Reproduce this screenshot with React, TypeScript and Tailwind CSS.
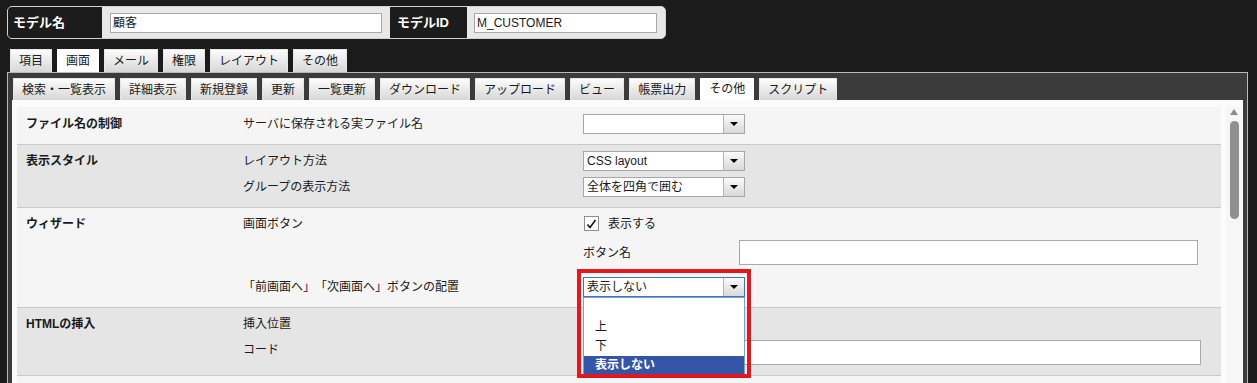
import React from "react";

function Select({ value = "", focused = false }: { value?: string; focused?: boolean }) {
  return (
    <div
      className={`flex h-[20px] w-[162px] border bg-white ${
        focused ? "border-[#3f74c0]" : "border-[#a6a6a6]"
      }`}
    >
      <div className="flex-1 truncate pl-[3px] leading-[18px]">{value}</div>
      <div className="flex w-[21px] items-center justify-center border-l border-[#b4b4b4] bg-linear-to-b from-[#fafafa] to-[#d9d9d9]">
        <div className="h-0 w-0 border-x-[4px] border-t-[4px] border-x-transparent border-t-black" />
      </div>
    </div>
  );
}

function Tab({ label, active = false, tall = false }: { label: string; active?: boolean; tall?: boolean }) {
  return (
    <div
      className={`flex items-center ${tall ? "h-[23px]" : "h-[22px]"} ${
        active
          ? "bg-white px-[9px]"
          : "bg-linear-to-b from-[#fcfcfc] to-[#d7d7d7] border-t border-x border-[#e6e6e6] px-[8px]"
      }`}
    >
      {label}
    </div>
  );
}

function Row({
  label,
  gray = false,
  top = "pt-[6px]",
  children,
}: {
  label: string;
  gray?: boolean;
  top?: string;
  children?: React.ReactNode;
}) {
  return (
    <div
      className={`flex border-b border-[#c9c9c9] pb-[10px] ${top} ${
        gray ? "bg-[#e5e5e5]" : "bg-[#f5f5f5]"
      }`}
    >
      <div className="w-[226px] pl-[9px] font-bold leading-[20px]">{label}</div>
      <div className="flex flex-1 flex-col gap-[6px]">{children}</div>
    </div>
  );
}

function Field({ label, children }: { label?: string; children?: React.ReactNode }) {
  return (
    <div className="flex">
      <div className="w-[340px] leading-[20px]">{label}</div>
      <div className="flex-1 pr-[20px]">{children}</div>
    </div>
  );
}

export default function App() {
  const topTabs = ["項目", "画面", "メール", "権限", "レイアウト", "その他"];
  const subTabs = [
    "検索・一覧表示",
    "詳細表示",
    "新規登録",
    "更新",
    "一覧更新",
    "ダウンロード",
    "アップロード",
    "ビュー",
    "帳票出力",
    "その他",
    "スクリプト",
  ];

  return (
    <div className="relative h-[383px] w-[1257px] overflow-hidden bg-[#1b1b1b] font-['Liberation_Sans','Noto_Sans_CJK_JP',sans-serif] text-[12px] text-[#1a1a1a] [text-spacing-trim:space-all]">
      {/* Model header */}
      <div className="pl-[7px] pt-[6px]">
        <div className="flex h-[33px] w-[659px] overflow-hidden rounded-[5px] border border-[#d2d2d2] bg-[#e8e8e8]">
          <div className="flex w-[94px] items-center bg-[#1c1c1c] pl-[5px] text-[13px] font-bold text-white">
            モデル名
          </div>
          <div className="flex w-[288px] items-center px-[8px]">
            <div className="h-[20px] w-full border border-[#a8a8a8] bg-white pl-[2px] leading-[18px]">顧客</div>
          </div>
          <div className="flex w-[77px] items-center bg-[#1c1c1c] pl-[7px] text-[13px] font-bold text-white">
            モデルID
          </div>
          <div className="flex flex-1 items-center pl-[7px] pr-[8px]">
            <div className="h-[20px] w-full border border-[#a8a8a8] bg-white pl-[2px] leading-[18px]">M_CUSTOMER</div>
          </div>
        </div>
      </div>

      {/* Top tabs */}
      <div className="mt-[10px] flex gap-[5px] pl-[10px]">
        {topTabs.map((t) => (
          <Tab key={t} label={t} active={t === "画面"} tall />
        ))}
      </div>

      {/* Panel */}
      <div className="ml-[7px] w-[1241px] border border-[#b9b9b9] bg-[#3b3b3b] px-[4px] pt-[5px]">
        <div className="ml-[1px] flex gap-[5px]">
          {subTabs.map((t) => (
            <Tab key={t} label={t} active={t === "その他"} />
          ))}
        </div>

        <div className="flex h-[300px] bg-[#fbfbfb] pl-[5px] pt-[7px]">
          <div className="w-[1204px]">
            <Row label="ファイル名の制御" top="pt-[7px]">
              <Field label="サーバに保存される実ファイル名">
                <Select />
              </Field>
            </Row>

            <Row label="表示スタイル" gray>
              <Field label="レイアウト方法">
                <Select value="CSS layout" />
              </Field>
              <Field label="グループの表示方法">
                <Select value="全体を四角で囲む" />
              </Field>
            </Row>

            <Row label="ウィザード">
              <Field label="画面ボタン">
                <div className="flex h-[19px] items-center gap-[9px] pl-[1px]">
                  <div className="flex h-[15px] w-[15px] items-center justify-center border border-[#8e8e8e] bg-white">
                    <svg width="11" height="10" viewBox="0 0 11 10">
                      <path d="M1.5 5.5 L4 8.5 L9.5 1" fill="none" stroke="#111" strokeWidth="1.6" />
                    </svg>
                  </div>
                  <span>表示する</span>
                </div>
              </Field>
              <Field>
                <div className="flex items-center">
                  <div className="w-[156px]">ボタン名</div>
                  <div className="h-[25px] w-[459px] border border-[#a9a9a9] bg-white" />
                </div>
              </Field>
              <div className="mt-[6px]">
                <Field label="「前画面へ」「次画面へ」ボタンの配置">
                  <div className="relative w-[162px]">
                    <Select value="表示しない" focused />
                    <div className="absolute left-0 top-[20px] z-10 w-[162px] border border-[#7aa0cf] bg-white">
                      <div className="h-[20px]" />
                      <div className="h-[19px] pl-[11px] leading-[19px]">上</div>
                      <div className="h-[19px] pl-[11px] leading-[19px]">下</div>
                      <div className="h-[19px] bg-[#3454a6] pl-[11px] font-bold leading-[19px] text-white">
                        表示しない
                      </div>
                    </div>
                    <div className="pointer-events-none absolute -left-[6px] -top-[8px] z-20 h-[109px] w-[174px] border-[4px] border-[#e3181f]" />
                  </div>
                </Field>
              </div>
            </Row>

            <Row label="HTMLの挿入" gray>
              <Field label="挿入位置">
                <Select />
              </Field>
              <Field label="コード">
                <div className="h-[25px] w-full border border-[#a9a9a9] bg-white" />
              </Field>
            </Row>

            <div className="h-[20px] bg-[#f5f5f5]" />
          </div>

          {/* Scrollbar */}
          <div className="ml-[5px] flex w-[16px] flex-col items-center bg-[#f6f6f6] pt-[2px]">
            <div className="h-0 w-0 border-x-[4px] border-b-[6px] border-x-transparent border-b-[#8a8a8a]" />
            <div className="mt-[6px] h-[98px] w-[9px] rounded-[5px] bg-[#8f8f8f]" />
          </div>
        </div>
      </div>
    </div>
  );
}
